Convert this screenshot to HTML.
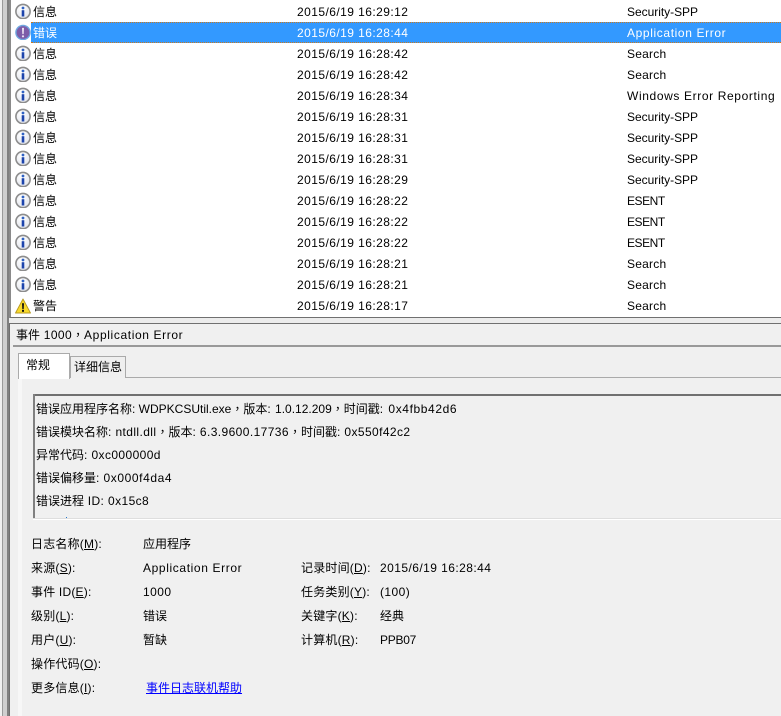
<!DOCTYPE html>
<html><head><meta charset="utf-8">
<style>
html,body{margin:0;padding:0}
body{width:781px;height:716px;overflow:hidden;position:relative;background:#f0f0f0;font:12px/16px "Liberation Sans","Noto Sans CJK SC",sans-serif;color:#000;letter-spacing:.4px}
.a{position:absolute}
.t{position:absolute;white-space:nowrap;height:16px}
.c{letter-spacing:0}
.l{letter-spacing:.2px}
.n{letter-spacing:.44px}
.s{letter-spacing:-.03px}
.e{letter-spacing:-.45px}
.h{letter-spacing:.22px}
.p{letter-spacing:.62px}
.z{letter-spacing:0}
.x{letter-spacing:.6px}
.m{display:inline-block;width:12px;text-align:center;letter-spacing:0;font-family:"Liberation Sans","Noto Sans CJK TC",sans-serif}
u{text-underline-offset:1px}
svg{position:absolute;left:15px;width:16px;height:16px}
.sel{color:#fff}
</style></head><body>
<svg width="0" height="0" style="left:0;top:0;width:0;height:0">
<defs>
<radialGradient id="g" cx=".4" cy=".3" r=".8"><stop offset="0" stop-color="#fff"/><stop offset="1" stop-color="#dfe2ea"/></radialGradient>
<symbol id="info" viewBox="0 -.5 16 16"><circle cx="8" cy="8" r="7.1" fill="url(#g)" stroke="#8c8c8c" stroke-width="1.6"/><circle cx="8" cy="4.5" r="1.4" fill="#2f62c4"/><path d="M6.7 6.7h2.6v6.3H6.7z" fill="#1c44ac"/></symbol>
<symbol id="err" viewBox="0 -.5 16 16"><circle cx="8" cy="8" r="7.1" fill="#7d5ca8" stroke="#6fa6df" stroke-width="1.4"/><path d="M7 3.4h2l-.35 6.2h-1.3z" fill="#eee6f4"/><circle cx="8" cy="11.8" r="1.1" fill="#eee6f4"/></symbol>
<symbol id="warn" viewBox="0 0 16 16"><path d="M8 1L15.5 15H.5z" fill="#f8d92c" stroke="#b89a20" stroke-width=".9" stroke-linejoin="round"/><path d="M7 5.2h2l-.3 5.8H7.3z" fill="#111"/><rect x="7" y="11.8" width="2" height="2" fill="#111"/></symbol>
</defs></svg>

<!-- list pane -->
<div class="a" style="left:0;top:0;width:2px;height:716px;background:#f0f0f0"></div>
<div class="a" style="left:2px;top:0;width:1px;height:716px;background:#9a9a9a"></div>
<div class="a" style="left:3px;top:0;width:4px;height:716px;background:#cfcfcf"></div>
<div class="a" style="left:7px;top:0;width:2px;height:716px;background:#808080"></div>
<div class="a" style="left:9px;top:0;width:2px;height:318px;background:#8a8a8a"></div>
<div class="a" style="left:11px;top:0;width:770px;height:317px;background:#fff"></div>
<div class="a" style="left:10px;top:317px;width:771px;height:1px;background:#707070"></div>
<div class="a" style="left:9px;top:318px;width:772px;height:5px;background:#ececec"></div>

<div class="a" style="left:31px;top:22px;width:750px;height:19px;background:#3399ff;border-top:1px dotted #c87a20;border-bottom:1px dotted #c87a20"></div>

<svg style="top:3px"><use href="#info"/></svg>
<svg style="top:24px"><use href="#err"/></svg>
<svg style="top:45px"><use href="#info"/></svg>
<svg style="top:66px"><use href="#info"/></svg>
<svg style="top:87px"><use href="#info"/></svg>
<svg style="top:108px"><use href="#info"/></svg>
<svg style="top:129px"><use href="#info"/></svg>
<svg style="top:150px"><use href="#info"/></svg>
<svg style="top:171px"><use href="#info"/></svg>
<svg style="top:192px"><use href="#info"/></svg>
<svg style="top:213px"><use href="#info"/></svg>
<svg style="top:234px"><use href="#info"/></svg>
<svg style="top:255px"><use href="#info"/></svg>
<svg style="top:276px"><use href="#info"/></svg>
<svg style="top:298px"><use href="#warn"/></svg>

<div class="t c" style="left:33px;top:4px">信息</div><div class="t n" style="left:297px;top:4px">2015/6/19 16:29:12</div><div class="t s" style="left:627px;top:4px">Security-SPP</div>
<div class="t c sel" style="left:33px;top:25px">错误</div><div class="t n sel" style="left:297px;top:25px">2015/6/19 16:28:44</div><div class="t p sel" style="left:627px;top:25px">Application Error</div>
<div class="t c" style="left:33px;top:46px">信息</div><div class="t n" style="left:297px;top:46px">2015/6/19 16:28:42</div><div class="t h" style="left:627px;top:46px">Search</div>
<div class="t c" style="left:33px;top:67px">信息</div><div class="t n" style="left:297px;top:67px">2015/6/19 16:28:42</div><div class="t h" style="left:627px;top:67px">Search</div>
<div class="t c" style="left:33px;top:88px">信息</div><div class="t n" style="left:297px;top:88px">2015/6/19 16:28:34</div><div class="t p" style="left:627px;top:88px">Windows Error Reporting</div>
<div class="t c" style="left:33px;top:109px">信息</div><div class="t n" style="left:297px;top:109px">2015/6/19 16:28:31</div><div class="t s" style="left:627px;top:109px">Security-SPP</div>
<div class="t c" style="left:33px;top:130px">信息</div><div class="t n" style="left:297px;top:130px">2015/6/19 16:28:31</div><div class="t s" style="left:627px;top:130px">Security-SPP</div>
<div class="t c" style="left:33px;top:151px">信息</div><div class="t n" style="left:297px;top:151px">2015/6/19 16:28:31</div><div class="t s" style="left:627px;top:151px">Security-SPP</div>
<div class="t c" style="left:33px;top:172px">信息</div><div class="t n" style="left:297px;top:172px">2015/6/19 16:28:29</div><div class="t s" style="left:627px;top:172px">Security-SPP</div>
<div class="t c" style="left:33px;top:193px">信息</div><div class="t n" style="left:297px;top:193px">2015/6/19 16:28:22</div><div class="t e" style="left:627px;top:193px">ESENT</div>
<div class="t c" style="left:33px;top:214px">信息</div><div class="t n" style="left:297px;top:214px">2015/6/19 16:28:22</div><div class="t e" style="left:627px;top:214px">ESENT</div>
<div class="t c" style="left:33px;top:235px">信息</div><div class="t n" style="left:297px;top:235px">2015/6/19 16:28:22</div><div class="t e" style="left:627px;top:235px">ESENT</div>
<div class="t c" style="left:33px;top:256px">信息</div><div class="t n" style="left:297px;top:256px">2015/6/19 16:28:21</div><div class="t h" style="left:627px;top:256px">Search</div>
<div class="t c" style="left:33px;top:277px">信息</div><div class="t n" style="left:297px;top:277px">2015/6/19 16:28:21</div><div class="t h" style="left:627px;top:277px">Search</div>
<div class="t c" style="left:33px;top:298px">警告</div><div class="t n" style="left:297px;top:298px">2015/6/19 16:28:17</div><div class="t h" style="left:627px;top:298px">Search</div>

<!-- detail pane -->
<div class="a" style="left:9px;top:323px;width:772px;height:1px;background:#707070"></div>
<div class="a" style="left:9px;top:323px;width:1px;height:393px;background:#707070"></div>
<div class="a" style="left:10px;top:324px;width:771px;height:392px;background:#f0f0f0"></div>
<div class="t" style="left:16px;top:327px"><span class="c">事件</span> 1000<span class="m">，</span><span class="p">Application Error</span></div>
<div class="a" style="left:13px;top:345px;width:768px;height:2px;background:#999"></div>

<div class="a" style="left:18px;top:377px;width:763px;height:1px;background:#aaa"></div>
<div class="a" style="left:18px;top:378px;width:4px;height:338px;background:#f7f7f7"></div>
<div class="a" style="left:70px;top:356px;width:54px;height:21px;background:#efefef;border:1px solid #aaa;border-bottom:0"></div>
<div class="a" style="left:18px;top:353px;width:50px;height:25px;background:#fff;border:1px solid #aaa;border-bottom:0"></div>
<div class="t c" style="left:26px;top:357px">常规</div>
<div class="t c" style="left:74px;top:359px">详细信息</div>

<div class="a" style="left:33px;top:394px;width:748px;height:2px;background:#707070"></div>
<div class="a" style="left:33px;top:394px;width:2px;height:125px;background:#808080"></div>
<div class="a" style="left:33px;top:518px;width:748px;height:1px;background:#dedede"></div>
<div class="a" style="left:33px;top:519px;width:748px;height:1px;background:#fff"></div>
<div class="a" style="left:66px;top:517px;width:1px;height:1px;background:#2277cc"></div>

<div class="t z" style="left:36px;top:401px">错误应用程序名称: WDPKCSUtil.exe<span class="m">，</span>版本: <span style="margin-left:1px">1.0.12.209</span><span class="m">，</span>时间戳: <span class="x" style="margin-left:2px">0x4fbb42d6</span></div>
<div class="t" style="left:36px;top:424px"><span class="c">错误模块名称</span>: ntdll.dll<span class="m">，</span><span class="c">版本</span>: 6.3.9600.17736<span class="m">，</span><span class="c">时间戳</span>: 0x550f42c2</div>
<div class="t" style="left:36px;top:447px"><span class="c">异常代码</span>: 0xc000000d</div>
<div class="t" style="left:36px;top:470px"><span class="c">错误偏移量</span>: <span class="x">0x000f4da4</span></div>
<div class="t" style="left:36px;top:493px"><span class="c">错误进程</span> ID: 0x15c8</div>

<div class="t l" style="left:31px;top:536px">日志名称(<u>M</u>):</div><div class="t c" style="left:143px;top:536px">应用程序</div>
<div class="t l" style="left:31px;top:560px">来源(<u>S</u>):</div><div class="t p" style="left:143px;top:560px">Application Error</div>
<div class="t l" style="left:301px;top:560px">记录时间(<u>D</u>):</div><div class="t n" style="left:380px;top:560px">2015/6/19 16:28:44</div>
<div class="t l" style="left:31px;top:584px">事件 ID(<u>E</u>):</div><div class="t n" style="left:143px;top:584px">1000</div>
<div class="t l" style="left:301px;top:584px">任务类别(<u>Y</u>):</div><div class="t n" style="left:380px;top:584px">(100)</div>
<div class="t l" style="left:31px;top:608px">级别(<u>L</u>):</div><div class="t c" style="left:143px;top:608px">错误</div>
<div class="t l" style="left:301px;top:608px">关键字(<u>K</u>):</div><div class="t c" style="left:380px;top:608px">经典</div>
<div class="t l" style="left:31px;top:632px">用户(<u>U</u>):</div><div class="t c" style="left:143px;top:632px">暂缺</div>
<div class="t l" style="left:301px;top:632px">计算机(<u>R</u>):</div><div class="t" style="left:380px;top:632px;letter-spacing:-.25px">PPB07</div>
<div class="t l" style="left:31px;top:656px">操作代码(<u>O</u>):</div>
<div class="t l" style="left:31px;top:680px">更多信息(<u>I</u>):</div>
<div class="t c" style="left:146px;top:680px;color:#0000ff;text-decoration:underline">事件日志联机帮助</div>
</body></html>
